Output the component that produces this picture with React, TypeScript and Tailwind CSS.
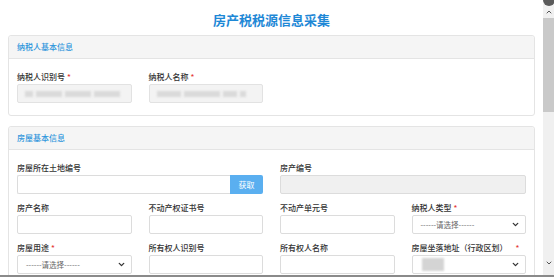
import { ChevronDown, ChevronUp } from "lucide-react";

const font = { fontFamily: '"Noto Sans CJK SC", "Noto Sans", sans-serif' };

const Label = ({ text, required, spaced }: { text: string; required?: boolean; spaced?: boolean }) => (
  <div className="h-[13px] leading-[13px] text-[8px] text-[#333] font-medium whitespace-nowrap">
    {text}
    {required && (
      <span className={`text-[#e53935] text-[8px] ${spaced ? "ml-[8px]" : "ml-[2px]"}`}>*</span>
    )}
  </div>
);

const TextBox = ({ gray }: { gray?: boolean }) => (
  <div
    className={`h-[19px] rounded-[2px] border border-[#dcdcdc] ${gray ? "bg-[#f0f0f0]" : "bg-white"}`}
  />
);

const Select = ({ blurred }: { blurred?: boolean }) => (
  <div className="h-[19px] rounded-[2px] border border-[#dcdcdc] bg-white flex items-center justify-between pl-[8px] pr-[5px]">
    {blurred ? (
      <div className="w-[22px] h-[13px] bg-[#d4d4d4] blur-[1px] ml-[1px]" />
    ) : (
      <span className="text-[7.5px] text-[#666]">------请选择------</span>
    )}
    <ChevronDown size={9} strokeWidth={3.5} className="text-[#333]" />
  </div>
);

const BlurBox = ({ widths }: { widths: number[] }) => (
  <div className="h-[19px] rounded-[2px] border border-[#e2e2e2] bg-[#f3f3f3] flex items-center gap-[3px] pl-[7px]">
    {widths.map((w, i) => (
      <div key={i} className="h-[6px] bg-[#dadada] blur-[1px]" style={{ width: w }} />
    ))}
  </div>
);

const Panel = ({ title, children }: { title: string; children: React.ReactNode }) => (
  <div className="mx-[8px] border border-[#e4e4e4] rounded-[3px] bg-white">
    <div className="h-[23px] bg-[#f5f5f5] border-b border-[#e4e4e4] flex items-center px-[8px] rounded-t-[3px]">
      <span className="text-[8px] text-[#2f95dc] font-medium">{title}</span>
    </div>
    {children}
  </div>
);

const Field = ({ children, className = "" }: { children: React.ReactNode; className?: string }) => (
  <div className={`flex flex-col gap-[1px] ${className}`}>{children}</div>
);

export default function App() {
  return (
    <div className="w-[554px] h-[277px] overflow-hidden bg-white flex flex-col relative" style={font}>
      <div className="flex flex-1 min-h-0">
        <div className="flex-1 pt-[13px]">
          <h1 className="text-center text-[13px] leading-[14px] font-bold text-[#1e88d6] mb-[8px]">
            房产税税源信息采集
          </h1>

          <Panel title="纳税人基本信息">
            <div className="grid grid-cols-4 gap-x-[17px] px-[8px] pt-[11px] pb-[12px]">
              <Field>
                <Label text="纳税人识别号" required />
                <BlurBox widths={[8, 26, 26, 26]} />
              </Field>
              <Field>
                <Label text="纳税人名称" required />
                <BlurBox widths={[24, 36, 14, 6]} />
              </Field>
            </div>
          </Panel>

          <div className="h-[10px]" />

          <Panel title="房屋基本信息">
            <div className="grid grid-cols-4 gap-x-[17px] gap-y-[7px] px-[8px] pt-[11px] pb-[12px]">
              <Field className="col-span-2">
                <Label text="房屋所在土地编号" />
                <div className="flex h-[19px]">
                  <div className="flex-1 border border-[#dcdcdc] border-r-0 rounded-l-[2px] bg-white" />
                  <div className="w-[33px] bg-[#5aaff0] rounded-r-[2px] flex items-center justify-center text-white text-[8px]">
                    获取
                  </div>
                </div>
              </Field>
              <Field className="col-span-2">
                <Label text="房产编号" />
                <TextBox gray />
              </Field>

              <Field>
                <Label text="房产名称" />
                <TextBox />
              </Field>
              <Field>
                <Label text="不动产权证书号" />
                <TextBox />
              </Field>
              <Field>
                <Label text="不动产单元号" />
                <TextBox />
              </Field>
              <Field>
                <Label text="纳税人类型" required />
                <Select />
              </Field>

              <Field>
                <Label text="房屋用途" required />
                <Select />
              </Field>
              <Field>
                <Label text="所有权人识别号" />
                <TextBox />
              </Field>
              <Field>
                <Label text="所有权人名称" />
                <TextBox />
              </Field>
              <Field>
                <Label text="房屋坐落地址（行政区划）" required spaced />
                <Select blurred />
              </Field>
            </div>
          </Panel>
        </div>

        {/* scrollbar */}
        <div className="w-[11px] bg-[#f0f0f0] flex flex-col items-center">
          <div className="h-[18px] flex items-end pb-[2px]">
            <ChevronUp size={8} strokeWidth={3} className="text-[#555]" />
          </div>
          <div className="w-full h-[94px] bg-[#c9c9c9]" />
          <div className="flex-1" />
          <div className="h-[16px] flex items-start">
            <ChevronDown size={8} strokeWidth={3} className="text-[#555]" />
          </div>
        </div>
      </div>
      <div className="h-[2px] bg-[#8a8a8a]" />

      {/* close button peeking in the corner */}
      <div className="absolute right-[-1px] top-[-6px] w-[12px] h-[12px] rounded-full bg-[#5a5a5a]" />
    </div>
  );
}
